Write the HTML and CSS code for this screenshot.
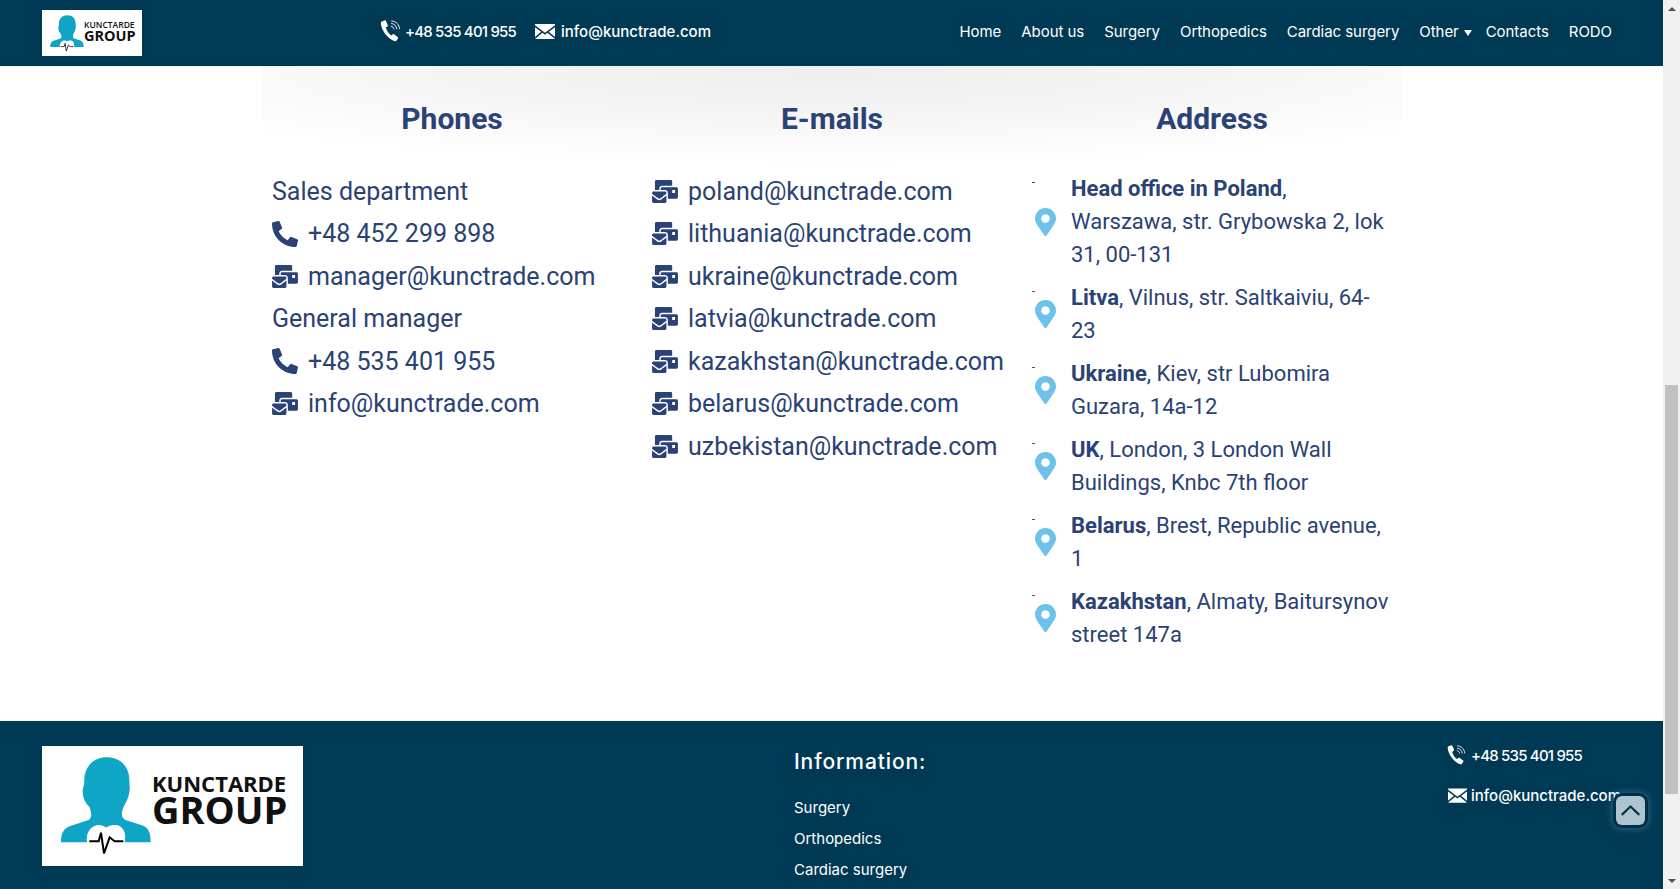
FILE: index.html
```html
<!DOCTYPE HTML>
<html>
<head>
    <meta charset="utf-8" />
    <title>Kunctrade Group - Contacts</title>
    <link rel="stylesheet" href="styles.css">
</head>
<body>

<svg class="icon-defs" aria-hidden="true">
    <symbol id="i-phone" viewBox="0 0 512 512">
        <path d="M18.6 24.6l104-24c11.3-2.6 22.9 3.3 27.5 13.9l48 112c4.2 9.8 1.4 21.3-6.9 28l-60.6 49.6c36 76.7 98.9 140.5 177.2 177.2l49.6-60.6c6.8-8.3 18.2-11.1 28-6.9l112 48c10.7 4.6 16.6 16.2 14 27.5l-24 104C484.900 504.200 475.300 512 464 512 207.900 512 0 304.500 0 48c0-11.200 7.700-20.900 18.600-23.400z"/>
    </symbol>
    <symbol id="i-mail" viewBox="0 0 576 512">
        <path d="M160 448c-25.6 0-51.2-22.4-64-32-64-44.8-83.2-60.8-96-70.4V480c0 17.67 14.33 32 32 32h256c17.67 0 32-14.33 32-32V345.6c-12.8 9.6-32 25.6-96 70.4-12.8 9.6-38.4 32-64 32zm128-192H32c-17.67 0-32 14.33-32 32v16c25.6 19.2 22.4 19.2 115.2 86.4 9.6 6.4 28.8 25.6 44.8 25.6s35.2-19.2 44.8-22.4c92.8-67.2 89.6-67.2 115.2-86.4V288c0-17.67-14.33-32-32-32zm256-96H224c-17.67 0-32 14.33-32 32v32h96c33.21 0 60.59 25.42 63.71 57.82l.29-.22V416h192c17.67 0 32-14.33 32-32V192c0-17.67-14.33-32-32-32zm-32 128h-64v-64h64v64zm-352-96c0-35.29 28.71-64 64-64h224V32c0-17.67-14.33-32-32-32H96C78.33 0 64 14.33 64 32v192h96v-32z"/>
    </symbol>
    <symbol id="i-pin" viewBox="0 0 384 512">
        <path d="M172.268 501.67C26.97 291.031 0 262.429 0 192 0 85.961 85.961 0 192 0s192 85.961 192 192c0 70.429-26.97 99.031-172.268 309.67-9.535 13.774-29.93 13.773-39.464 0zM192 272c44.183 0 80-35.817 80-80s-35.817-80-80-80-80 35.817-80 80 35.817 80 80 80z"/>
    </symbol>
    <symbol id="i-call" viewBox="0 0 24 24">
        <path d="M3.700 1.300l2.600-.9c.6-.2 1.100.1 1.300.6l2 4.700c.2.500 0 1-.4 1.300L7.400 8.300c.9 3.200 3 6.600 5.800 8.600l1.900-1.300c.4-.3 1-.3 1.400 0l4 3.100c.4.300.5.900.2 1.400l-1.500 2.300c-.4.600-1.100 1-1.900.8C10.600 21.300 2.400 11.800 2 3.300c0-.9.700-1.700 1.700-2z"/>
        <path class="waves" d="M13 6.800c1.800.2 3.100 1.500 3.400 3.400M13.200 3.800c3.500.2 6 2.800 6.300 6.300M13.400 1c5 .2 8.800 4 9.100 9"/>
    </symbol>
    <symbol id="i-letter" viewBox="0 0 24 18">
        <path d="M0 1.500L12 10.500 24 1.500V0H0zM0 3.800V15.500L7.400 9.300zM24 3.800L16.600 9.300 24 15.500zM8.900 10.500L0 18H24L15.100 10.500 12 12.800z"/>
    </symbol>
    <symbol id="i-person" viewBox="0 0 270 330">
        <path class="person" d="M0 265C0 238 8 223 28 216L83 198C93 190 93 178 85 158 73 148 65 133 65 108 67 98 70 93 70 78 70 38 98 10 137 10 178 10 205 38 205 78 205 93 208 103 205 113 203 133 193 148 188 158 180 178 180 190 193 198L243 214C263 221 269 238 269 265Z"/>
        <path class="heart" d="M78 265C73 233 93 213 113 213 123 213 133 218 135 221 138 218 148 213 163 213 183 213 198 233 191 265L135 318Z"/>
        <path class="pulse" d="M85 262H113L120 236 129 298 146 250 161 262H187"/>
    </symbol>
</svg>

<div class="window">
    <div class="page">
        <header class="topbar">
            <div class="logo logo-small">
                <svg class="logo-person"><use href="#i-person"/></svg>
                <div class="logo-text">
                    <span class="logo-line1">KUNCTARDE</span>
                    <span class="logo-line2">GROUP</span>
                </div>
            </div>
            <div class="top-contacts">
                <a class="top-contact"><svg class="i-call"><use href="#i-call"/></svg><span class="tel">+48 535 401 955</span></a>
                <a class="top-contact"><svg class="i-letter"><use href="#i-letter"/></svg>info@kunctrade.com</a>
            </div>
            <nav class="nav">
                <a>Home</a>
                <a>About us</a>
                <a>Surgery</a>
                <a>Orthopedics</a>
                <a>Cardiac surgery</a>
                <a class="nav-other">Other<i class="caret"></i></a>
                <a>Contacts</a>
                <a>RODO</a>
            </nav>
        </header>

        <main class="contacts">
            <section class="col">
                <h2>Phones</h2>
                <div class="row">Sales department</div>
                <div class="row"><svg class="i-phone"><use href="#i-phone"/></svg>+48 452 299 898</div>
                <div class="row"><svg class="i-mail"><use href="#i-mail"/></svg>manager@kunctrade.com</div>
                <div class="row">General manager</div>
                <div class="row"><svg class="i-phone"><use href="#i-phone"/></svg>+48 535 401 955</div>
                <div class="row"><svg class="i-mail"><use href="#i-mail"/></svg>info@kunctrade.com</div>
            </section>
            <section class="col">
                <h2>E-mails</h2>
                <div class="row"><svg class="i-mail"><use href="#i-mail"/></svg>poland@kunctrade.com</div>
                <div class="row"><svg class="i-mail"><use href="#i-mail"/></svg>lithuania@kunctrade.com</div>
                <div class="row"><svg class="i-mail"><use href="#i-mail"/></svg>ukraine@kunctrade.com</div>
                <div class="row"><svg class="i-mail"><use href="#i-mail"/></svg>latvia@kunctrade.com</div>
                <div class="row"><svg class="i-mail"><use href="#i-mail"/></svg>kazakhstan@kunctrade.com</div>
                <div class="row"><svg class="i-mail"><use href="#i-mail"/></svg>belarus@kunctrade.com</div>
                <div class="row"><svg class="i-mail"><use href="#i-mail"/></svg>uzbekistan@kunctrade.com</div>
            </section>
            <section class="col col-addr">
                <h2>Address</h2>
                <div class="addr"><svg class="i-pin"><use href="#i-pin"/></svg><p><b>Head office in Poland</b>, Warszawa, str. Grybowska 2, lok 31, 00-131</p></div>
                <div class="addr"><svg class="i-pin"><use href="#i-pin"/></svg><p><b>Litva</b>, Vilnus, str. Saltkaiviu, 64-23</p></div>
                <div class="addr"><svg class="i-pin"><use href="#i-pin"/></svg><p><b>Ukraine</b>, Kiev, str Lubomira Guzara, 14a-12</p></div>
                <div class="addr"><svg class="i-pin"><use href="#i-pin"/></svg><p><b>UK</b>, London, 3 London Wall Buildings, Knbc 7th floor</p></div>
                <div class="addr"><svg class="i-pin"><use href="#i-pin"/></svg><p><b>Belarus</b>, Brest, Republic avenue, 1</p></div>
                <div class="addr"><svg class="i-pin"><use href="#i-pin"/></svg><p><b>Kazakhstan</b>, Almaty, Baitursynov street 147a</p></div>
            </section>
        </main>

        <footer class="footer">
            <div class="logo logo-big">
                <svg class="logo-person"><use href="#i-person"/></svg>
                <div class="logo-text">
                    <span class="logo-line1">KUNCTARDE</span>
                    <span class="logo-line2">GROUP</span>
                </div>
            </div>
            <div class="foot-info">
                <h3>Information:</h3>
                <a>Surgery</a>
                <a>Orthopedics</a>
                <a>Cardiac surgery</a>
            </div>
            <div class="foot-contacts">
                <a class="foot-contact"><svg class="i-call"><use href="#i-call"/></svg><span class="tel">+48 535 401 955</span></a>
                <a class="foot-contact"><svg class="i-letter"><use href="#i-letter"/></svg>info@kunctrade.com</a>
            </div>
        </footer>

        <a class="to-top">
            <svg viewBox="0 0 24 14"><path d="M2 12L12 2.500 22 12"/></svg>
        </a>
    </div>

    <div class="scrollbar">
        <i class="arrow arrow-up"></i>
        <div class="track"><div class="thumb"></div></div>
        <i class="arrow arrow-down"></i>
    </div>
</div>

</body>
</html>
```

FILE: styles.css
```css
html, body {
    margin: 0;
    padding: 0;
    height: 100%;
    overflow: hidden;
    background: #fff;
    font-family: Roboto, Arial, sans-serif;
}
.icon-defs {
    display: none;
}
.window {
    display: flex;
    height: 889px;
}
.page {
    flex: 1;
    position: relative;
    overflow: hidden;
    min-width: 0;
}

/* logo */
.logo {
    display: flex;
    background: #fff;
    color: #111;
    font-family: "Open Sans", Arial, sans-serif;
    font-weight: 700;
}
.logo-text {
    display: flex;
    flex-direction: column;
}
.logo-text span {
    display: block;
    white-space: nowrap;
}
.person { fill: #0ea5c6; }
.heart { fill: #fff; }
.pulse { fill: none; stroke: #000; stroke-width: 6; }

.logo-small {
    width: 100px;
    height: 46px;
    padding: 4px 0 0 8px;
    box-sizing: border-box;
    gap: 0;
}
.logo-small .logo-person {
    width: 34px;
    height: 41px;
}
.logo-small .logo-text {
    padding-top: 7px;
}
.logo-small .logo-line1 {
    font-size: 8.500px;
    line-height: 8px;
    font-weight: 600;
}
.logo-small .logo-line2 {
    font-size: 14.500px;
    line-height: 13px;
}

.logo-big {
    width: 261px;
    height: 120px;
    padding: 8px 0 0 19px;
    box-sizing: border-box;
    gap: 1px;
}
.logo-big .logo-person {
    width: 90px;
    height: 110px;
}
.logo-big .logo-text {
    padding-top: 18px;
}
.logo-big .logo-line1 {
    font-size: 22px;
    line-height: 22px;
}
.logo-big .logo-line2 {
    font-size: 38px;
    line-height: 31px;
}

/* top bar */
.topbar {
    height: 66px;
    background: #003954;
    color: #fff;
    display: flex;
    align-items: center;
    padding: 0 51px 0 42px;
    font-family: Inter, Arial, sans-serif;
    font-size: 15px;
}
.top-contacts {
    display: flex;
    gap: 19px;
    margin-left: 237px;
    padding-bottom: 4px;
}
.top-contact, .foot-contact {
    display: flex;
    align-items: center;
    gap: 4px;
    font-weight: 500;
    white-space: nowrap;
}
.tel {
    letter-spacing: -.8px;
}
.i-call {
    width: 22px;
    height: 22px;
    flex: none;
    fill: #fff;
}
.waves {
    fill: none;
    stroke: #fff;
    stroke-width: 1;
}
.i-letter {
    width: 20px;
    height: 15px;
    margin-right: 2px;
    flex: none;
    fill: #fff;
}
.nav {
    display: flex;
    gap: 20px;
    margin-left: auto;
    padding-bottom: 4px;
    font-weight: 400;
    letter-spacing: -.05px;
}
.nav-other {
    display: flex;
    align-items: center;
    margin-right: -6px;
}
.caret {
    width: 0;
    height: 0;
    margin-left: 5px;
    margin-top: 3px;
    border-left: 4.500px solid transparent;
    border-right: 4.500px solid transparent;
    border-top: 6px solid #fff;
}

/* contacts */
.contacts {
    width: 1140px;
    height: 655px;
    margin: 0 auto;
    display: grid;
    grid-template-columns: repeat(3, 1fr);
    align-content: start;
    color: #2a4275;
    background: radial-gradient(ellipse 70% 100px at 50% 0, #eee 0, #f5f5f5 50%, #fff 100%) no-repeat;
}
.col {
    padding: 0 9.500px 0 10.500px;
    box-sizing: border-box;
    min-width: 0;
}
.col h2 {
    margin: 0;
    height: 104px;
    line-height: 106px;
    text-align: center;
    font-size: 30px;
    font-weight: 700;
}
.col-addr h2 {
    margin-bottom: 2px;
}
.row {
    height: 42.500px;
    display: flex;
    align-items: center;
    font-size: 25px;
    white-space: nowrap;
}
.i-phone {
    width: 26px;
    height: 26px;
    margin-right: 10px;
    fill: #2a4275;
    flex: none;
}
.i-mail {
    width: 26px;
    height: 23px;
    margin-right: 10px;
    fill: #2a4275;
    flex: none;
}
.addr {
    display: flex;
    align-items: center;
    margin-bottom: 10px;
    position: relative;
}
.addr::before {
    content: "";
    position: absolute;
    left: 0;
    top: 10px;
    width: 3px;
    height: 1px;
    background: #555;
}
.addr p {
    margin: 0;
    font-size: 22px;
    line-height: 33px;
}
.i-pin {
    width: 21px;
    height: 28px;
    margin: 0 15px 0 3px;
    fill: #6ec1e8;
    flex: none;
}

/* footer */
.footer {
    background: #003954;
    color: #fff;
    height: 260px;
    padding: 25px 0 0 42px;
    display: grid;
    grid-template-columns: 752px 652px 1fr;
    font-family: Inter, Arial, sans-serif;
}
.foot-info h3 {
    margin: 3px 0 17px;
    font-size: 21px;
    line-height: 26px;
    font-weight: 500;
    letter-spacing: .9px;
}
.foot-info a {
    display: block;
    font-size: 15px;
    line-height: 31px;
}
.foot-contacts {
    font-size: 15px;
    margin-top: -11px;
}
.foot-contact {
    height: 40px;
    gap: 5px;
}
.foot-contact .i-call {
    width: 20px;
    height: 20px;
}
.foot-contact .i-letter {
    width: 19px;
    margin: 0 -1px 0 2px;
}
.to-top {
    position: absolute;
    left: 1616px;
    top: 796px;
    width: 29px;
    height: 29px;
    border-radius: 6px;
    background: #b0c4d0;
    box-shadow: 0 0 0 3px #002f49, 0 0 6px 4px rgba(90, 160, 190, .45);
    display: flex;
    align-items: center;
    justify-content: center;
}
.to-top svg {
    width: 21px;
    height: 13px;
    fill: none;
    stroke: #00334d;
    stroke-width: 2.500;
}

/* fake scrollbar */
.scrollbar {
    width: 17px;
    flex: none;
    background: #f1f1f1;
    display: flex;
    flex-direction: column;
}
.arrow {
    height: 17px;
    flex: none;
    display: flex;
    align-items: center;
    justify-content: center;
}
.arrow::after {
    content: "";
    border-left: 4px solid transparent;
    border-right: 4px solid transparent;
}
.arrow-up::after {
    border-bottom: 4px solid #505050;
}
.arrow-down::after {
    border-top: 4px solid #505050;
}
.track {
    flex: 1;
}
.thumb {
    margin: 368px 2px 0;
    height: 409px;
    background: #c1c1c1;
}
```
